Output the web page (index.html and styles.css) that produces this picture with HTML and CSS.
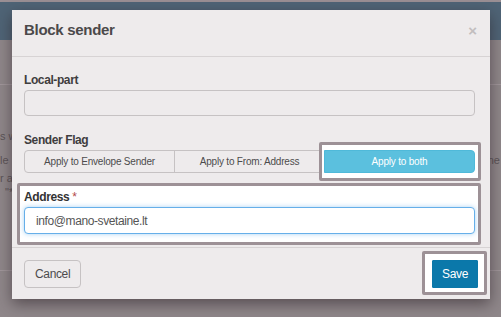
FILE: index.html
```html
<!DOCTYPE html>
<html>
<head>
<meta charset="utf-8">
<title>Block sender</title>
<link rel="stylesheet" href="styles.css">
</head>
<body>
<div class="page">
  <div class="topbar"></div>
  <div class="page-body">
    <hr class="rule rule-a">
    <p class="bg-line l1">s w</p>
    <p class="bg-line l2"><span>le</span><span>ne</span></p>
    <p class="bg-line l3">r a</p>
    <p class="bg-line l4">"*"</p>
    <hr class="rule rule-b">
  </div>
</div>

<div class="modal">
  <div class="modal-header">
    <h4 class="modal-title">Block sender</h4>
    <span class="close">×</span>
  </div>
  <div class="modal-body">
    <div class="form-group">
      <label class="label">Local-part</label>
      <input class="form-control" type="text">
    </div>
    <div class="form-group">
      <label class="label">Sender Flag</label>
      <div class="btn-group">
        <div class="seg-cell"><button class="seg seg-first">Apply to Envelope Sender</button></div>
        <div class="seg-cell"><button class="seg">Apply to From: Address</button></div>
        <div class="seg-cell spot spot-seg"><button class="seg seg-last seg-active">Apply to both</button></div>
      </div>
    </div>
    <div class="form-group last spot spot-address">
      <label class="label label-hi">Address <span class="req">*</span></label>
      <input class="form-control form-focus" type="text" value="info@mano-svetaine.lt">
    </div>
  </div>
  <div class="modal-footer">
    <button class="btn">Cancel</button>
    <div class="spot spot-save"><button class="btn btn-primary">Save</button></div>
  </div>
</div>
</body>
</html>
```
FILE: styles.css
```css
* { box-sizing: border-box; }

html, body {
  margin: 0;
  padding: 0;
}

body {
  width: 501px;
  height: 317px;
  overflow: hidden;
  position: relative;
  background: #8f878a;
  font-family: "Liberation Sans", Arial, sans-serif;
}

.page {
  height: 317px;
}

.topbar {
  height: 40px;
  background: #4f6476;
  border-top: 2px solid #9a8f94;
}

.page-body {
  padding-top: 44px;
  font-size: 11px;
  color: #5c5457;
}

.rule {
  margin: 0;
  border: 0;
  height: 1px;
  background: #a1979b;
}

.bg-line {
  margin: 0;
  line-height: 13px;
  white-space: nowrap;
}

.l1 { margin-top: 45px; }
.l2 {
  margin-top: 11px;
  display: flex;
  justify-content: space-between;
  padding-right: 1px;
}
.l3 { margin-top: 5px; }
.l4 { margin-top: 1px; padding-left: 5px; }
.rule-b { margin-top: 71px; }

/* modal */
.modal {
  position: absolute;
  left: 12px;
  top: 10px;
  width: 478px;
  z-index: 1;
  background: #eeebec;
  box-shadow: 0 5px 14px rgba(40, 30, 35, 0.55);
}

.modal-header {
  display: flex;
  justify-content: space-between;
  align-items: flex-start;
  padding: 11px 13px 17px 12px;
  border-bottom: 1px solid #d7d3d4;
}

.modal-title {
  margin: 0;
  font-size: 15px;
  line-height: 17px;
  font-weight: bold;
  letter-spacing: -0.3px;
  color: #4b494a;
}

.close {
  font-size: 15px;
  line-height: 17px;
  font-weight: bold;
  color: #c2bebf;
  margin-top: 1px;
}

.modal-body {
  padding: 17px 15px 13px 12px;
}

.form-group {
  margin-bottom: 18px;
}

.form-group.last {
  margin-bottom: 0;
}

.label {
  display: block;
  font-size: 12px;
  line-height: 13px;
  font-weight: bold;
  letter-spacing: -0.4px;
  color: #3f3d3e;
  margin-bottom: 3px;
}

.label-hi {
  color: #333;
}

.req {
  color: #b24a4a;
  font-weight: normal;
}

.form-control {
  display: block;
  width: 100%;
  height: 26px;
  padding: 0 11px;
  border: 1px solid #c6c2c3;
  border-radius: 4px;
  background: #eeebec;
  font-family: "Liberation Sans", Arial, sans-serif;
  font-size: 12px;
  letter-spacing: -0.4px;
  color: #555;
  outline: none;
}

.form-focus {
  height: 27px;
  padding-left: 11px;
  background: #fff;
  border-color: #66afe9;
  box-shadow: 0 0 5px rgba(102, 175, 233, 0.55);
}

.btn-group {
  display: flex;
  margin-top: 2px;
}

.seg-cell {
  flex: 1 1 0;
  display: flex;
}

.seg-cell + .seg-cell {
  margin-left: -1px;
}

.seg {
  flex: 1;
  height: 23px;
  padding: 0;
  margin: 0;
  border: 1px solid #c6c2c3;
  border-radius: 0;
  background: #eeebec;
  font-family: "Liberation Sans", Arial, sans-serif;
  font-size: 10px;
  letter-spacing: -0.2px;
  color: #4d4b4c;
}

.seg-first {
  border-radius: 4px 0 0 4px;
}

.seg-last {
  border-radius: 0 4px 4px 0;
}

.seg-active {
  background: #5bc0de;
  border-color: #4fb9d9;
  color: #fff;
}

/* tour spotlight frames */
.spot {
  position: relative;
  z-index: 1;
}

.spot::before {
  content: "";
  position: absolute;
  z-index: -1;
  background: #fff;
  border: 3px solid #9d9196;
  border-radius: 2px;
}

.spot-seg::before {
  inset: -8px -6px -8px -5px;
}

.spot-address::before {
  inset: -8px -6px -11px -7px;
}

.spot-save::before {
  inset: -9px -9px -7px -10px;
}

.modal-footer {
  display: flex;
  justify-content: space-between;
  align-items: flex-start;
  padding: 12px 12px 11px 12px;
  border-top: 1px solid #d7d3d4;
}

.btn {
  height: 28px;
  padding: 0 10px;
  border: 1px solid #c6c2c3;
  border-radius: 4px;
  background: #eeebec;
  font-family: "Liberation Sans", Arial, sans-serif;
  font-size: 12px;
  letter-spacing: -0.35px;
  color: #4d4b4c;
}

.btn-primary {
  display: block;
  width: 46px;
  padding: 0;
  border: 1px solid #0b77a9;
  border-radius: 1px;
  background: #0b78aa;
  color: #fff;
}
```
